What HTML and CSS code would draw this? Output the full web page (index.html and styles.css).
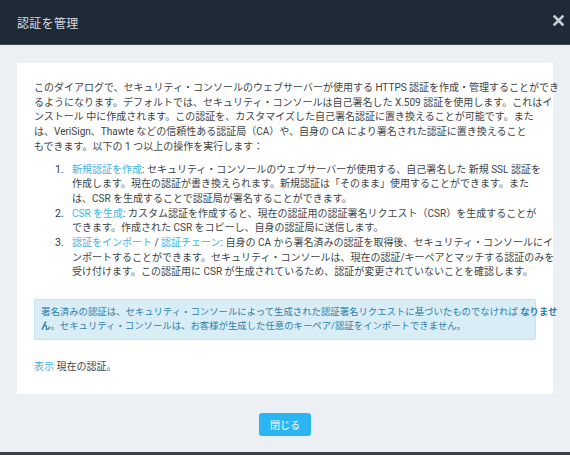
FILE: index.html
```html
<!DOCTYPE html>
<html lang="ja">
<head>
<meta charset="utf-8">
<title>認証を管理</title>
<link rel="stylesheet" href="styles.css">
</head>
<body>
<div class="dialog">
  <header class="dialog-header">
    <h1 class="dialog-title">認証を管理</h1>
    <button class="close-btn" type="button" aria-label="閉じる">
      <svg width="11" height="11" viewBox="0 0 11 11"><path d="M1.5 1.5 L9.5 9.5 M9.5 1.5 L1.5 9.5" stroke="#c9ced4" stroke-width="2.6" stroke-linecap="square" fill="none"/></svg>
    </button>
  </header>
  <div class="dialog-body">
    <div class="panel">
      <p class="intro">このダイアログで、セキュリティ・コンソールのウェブサーバーが使用する HTTPS 認証を作成・管理することができ<br>るようになります。デフォルトでは、セキュリティ・コンソールは自己署名した X.509 認証を使用します。これはイ<br>ンストール 中に作成されます。この認証を、カスタマイズした自己署名認証に置き換えることが可能です。また<br>は、VeriSign、Thawte などの信頼性ある認証局（CA）や、自身の CA により署名された認証に置き換えること<br>もできます。以下の 1 つ以上の操作を実行します：</p>
      <ol class="steps">
        <li><a class="link" href="#">新規認証を作成</a>: セキュリティ・コンソールのウェブサーバーが使用する、自己署名した 新規 SSL 認証を<br>作成します。現在の認証が書き換えられます。新規認証は「そのまま」使用することができます。また<br>は、CSR を生成することで認証局が署名することができます。</li>
        <li><a class="link" href="#">CSR を生成</a>: カスタム認証を作成すると、現在の認証用の認証署名リクエスト（CSR）を生成することが<br>できます。作成された CSR をコピーし、自身の認証局に送信します。</li>
        <li><a class="link" href="#">認証をインポート</a> / <a class="link" href="#">認証チェーン</a>: 自身の CA から署名済みの認証を取得後、セキュリティ・コンソールにイ<br>ンポートすることができます。セキュリティ・コンソールは、現在の認証/キーペアとマッチする認証のみを<br>受け付けます。この認証用に CSR が生成されているため、認証が変更されていないことを確認します。</li>
      </ol>
      <div class="notice">署名済みの認証は、セキュリティ・コンソールによって生成された認証署名リクエストに基づいたものでなければ <b>なりませ<br>ん</b>。セキュリティ・コンソールは、お客様が生成した任意のキーペア/認証をインポートできません。</div>
      <p class="view"><a class="link" href="#">表示</a> 現在の認証。</p>
    </div>
    <div class="actions">
      <button class="primary-btn" type="button">閉じる</button>
    </div>
  </div>
  <div class="bottom-edge"></div>
</div>
</body>
</html>
```

FILE: styles.css
```css
* { box-sizing: border-box; }

html, body {
  margin: 0;
  padding: 0;
  background: #eceff3;
}

body {
  font-family: "Roboto", "Noto Sans CJK JP", sans-serif;
  color: #404448;
}

.dialog {
  width: 570px;
  height: 455px;
  display: flex;
  flex-direction: column;
  overflow: hidden;
}

.dialog-header {
  height: 45px;
  flex: none;
  background: #1f2a38;
  display: flex;
  align-items: center;
  justify-content: space-between;
  padding: 0 6px 0 17px;
  border-bottom: 1px solid #3a4654;
}

.dialog-title {
  margin: 0;
  font-size: 12px;
  font-weight: normal;
  color: #d6dbe1;
  letter-spacing: 0.3px;
}

.close-btn {
  background: none;
  border: 0;
  padding: 0;
  width: 12px;
  height: 12px;
  display: flex;
  align-items: center;
  justify-content: center;
  margin-top: -4px;
}

.dialog-body {
  flex: 1;
  padding: 18px 17px 0;
  display: flex;
  flex-direction: column;
}

.panel {
  background: #fff;
  padding: 18px 17px 19px;
  font-size: 10px;
  line-height: 14.7px;
}

.intro {
  margin: 0;
  white-space: nowrap;
}

/* numbered steps: number sits in a gutter left of the wrapped text */
.steps {
  margin: 8px 0 0;
  padding-left: 38px;
  list-style: none;
  counter-reset: step;
  white-space: nowrap;
}

.steps li {
  counter-increment: step;
}

.steps li::before {
  content: counter(step) ".";
  display: inline-block;
  width: 17px;
  margin-left: -17px;
  font-size: 10.5px;
  color: #33373b;
}

.link {
  color: #45b2e3;
  text-decoration: none;
}

.notice {
  margin-top: 19px;
  background: #d9edf7;
  border: 1px solid #c3e3f0;
  border-radius: 2px;
  color: #2d7ea6;
  font-size: 9.4px;
  line-height: 13.5px;
  padding: 5px 6px 7px;
  white-space: nowrap;
}

.notice b {
  font-weight: bold;
}

.view {
  margin: 20px 0 0;
}

.actions {
  display: flex;
  justify-content: center;
  padding-top: 19px;
}

.primary-btn {
  width: 52px;
  height: 23px;
  border: 0;
  border-radius: 3px;
  background: #2bb6f3;
  color: #fff;
  font-family: "Noto Sans CJK JP", sans-serif;
  font-size: 10px;
  padding: 0;
}

.bottom-edge {
  height: 3px;
  flex: none;
  background: #3b4047;
}
```
